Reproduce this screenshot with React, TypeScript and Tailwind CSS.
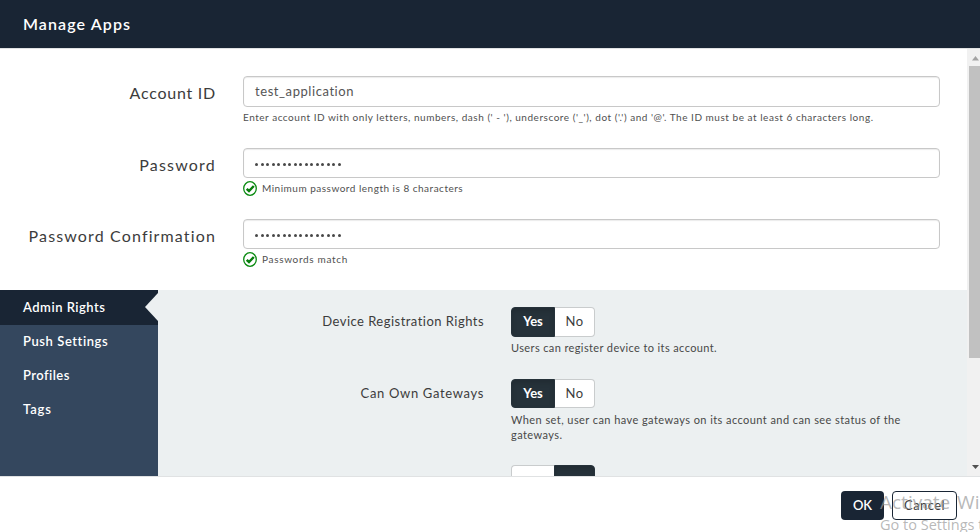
import type { ReactNode } from 'react';

function Check() {
  return (
    <svg width="14" height="15" viewBox="0 0 14 15" className="shrink-0">
      <ellipse cx="7" cy="7.5" rx="6.3" ry="6.8" fill="white" stroke="#098a10" strokeWidth="1.3" />
      <path d="M3.7 7.8 L6 10 L10.8 5" fill="none" stroke="#087d0d" strokeWidth="2.5" />
    </svg>
  );
}

function Field({ label, labelClass, value, inputClass, children }: { label: string; labelClass: string; value: ReactNode; inputClass: string; children: ReactNode }) {
  return (
    <div className="flex">
      <div className={'mr-[27px] w-[216px] shrink-0 whitespace-nowrap pt-[5px] text-right text-[16px] leading-[24px] text-[#3c3c3c] ' + labelClass}>{label}</div>
      <div className="w-[697px]">
        <div className={'flex items-center rounded-[4px] border border-[#c8c8c8] bg-white px-[11px] text-[13px] text-[#555] shadow-[inset_0_1px_1px_rgba(0,0,0,0.08)] ' + inputClass}>{value}</div>
        {children}
      </div>
    </div>
  );
}

function Dots() {
  return (
    <div className="flex gap-[2.5px] pt-[2px]">
      {Array.from({ length: 16 }, (_, i) => (
        <span key={i} className="size-[3px] rounded-full bg-[#484848]" />
      ))}
    </div>
  );
}

function Toggle({ on = true, height = 'h-[30px]', yesClass = 'w-[44px]' }: { on?: boolean; height?: string; yesClass?: string }) {
  const active = 'bg-[#26323a] font-bold text-white border-[#26323a] shadow-[inset_0_3px_5px_rgba(0,0,0,0.125)]';
  const idle = 'bg-white text-[#3c3c3c] border-[#c9cccd]';
  return (
    <div className={'flex w-[84px] text-[13px] ' + height}>
      <div className={'flex items-center justify-center rounded-l-[4px] border ' + yesClass + ' ' + (on ? active : idle + ' border-r-0')}>Yes</div>
      <div className={'flex flex-1 items-center justify-center rounded-r-[4px] border ' + (on ? idle + ' border-l-0 tracking-[0.4px]' : active)}>No</div>
    </div>
  );
}

const tabs = [
  { name: 'Push Settings', spacing: 'tracking-[0.57px]' },
  { name: 'Profiles', spacing: 'tracking-[0.45px]' },
  { name: 'Tags', spacing: 'tracking-[0.9px]' },
];

export default function App() {
  return (
    <div className="relative flex h-[532px] w-[980px] flex-col overflow-hidden bg-white font-['Lato',sans-serif]">
      <header className="flex h-[48px] shrink-0 items-center bg-[#192534] pb-[1px] pl-[23px] text-[16px] font-semibold tracking-[1.1px] text-white">Manage Apps</header>
      <div className="flex h-[429px] shrink-0 border-y border-[#e0e2e3]">
        <main className="w-[967px] overflow-hidden">
          <div className="flex h-[241px] flex-col pt-[27px]">
            <div className="h-[72px]">
              <Field label="Account ID" labelClass="tracking-[0.75px]" value={<span className="tracking-[0.57px]">test_application</span>} inputClass="h-[31px]">
                <p className="mt-[2px] whitespace-nowrap text-[10px] leading-[16px] tracking-[0.53px] text-[#505050]">Enter account ID with only letters, numbers, dash (' - '), underscore ('_'), dot ('.') and '@'. The ID must be at least 6 characters long.</p>
              </Field>
            </div>
            <div className="h-[71px]">
              <Field label="Password" labelClass="tracking-[1.2px]" value={<Dots />} inputClass="h-[30px]">
                <div className="mt-[3px] flex items-center gap-[5px] text-[10px] leading-[15px] tracking-[0.5px] text-[#505050]"><Check />Minimum password length is 8 characters</div>
              </Field>
            </div>
            <Field label="Password Confirmation" labelClass="tracking-[1.14px]" value={<Dots />} inputClass="h-[30px]">
              <div className="mt-[3px] flex items-center gap-[5px] text-[10px] leading-[15px] tracking-[0.67px] text-[#505050]"><Check />Passwords match</div>
            </Field>
          </div>
          <div className="flex h-[186px] bg-[#ecf0f1]">
            <nav className="w-[158px] shrink-0 bg-[#34475e] text-[13px] font-semibold text-white">
              <div className="flex h-[35px] items-center justify-between bg-[#192534] pl-[23px] tracking-[0.5px]">
                Admin Rights
                <svg width="13" height="28" viewBox="0 0 13 28" className="mb-[2px]"><path d="M13 0 L0 14 L13 28Z" fill="#ecf0f1" /></svg>
              </div>
              {tabs.map((t) => (
                <div key={t.name} className={'flex h-[34px] items-center pl-[23px] ' + t.spacing}>{t.name}</div>
              ))}
            </nav>
            <section className="w-[809px] pt-[17px] text-[#3c3c3c]">
              <div className="flex h-[72px]">
                <div className="mr-[27px] w-[326px] pt-[4px] text-right text-[13px] leading-[20px] tracking-[0.47px]">Device Registration Rights</div>
                <div>
                  <Toggle />
                  <p className="mt-[3px] text-[11px] leading-[15px] tracking-[0.38px] text-[#484848]">Users can register device to its account.</p>
                </div>
              </div>
              <div className="flex h-[86px]">
                <div className="mr-[27px] w-[326px] pt-[4px] text-right text-[13px] leading-[20px] tracking-[0.66px]">Can Own Gateways</div>
                <div>
                  <Toggle height="h-[29px]" />
                  <p className="mt-[4px] whitespace-nowrap text-[11px] leading-[15px] tracking-[0.43px] text-[#484848]">When set, user can have gateways on its account and can see status of the<br />gateways.</p>
                </div>
              </div>
              <div className="pl-[353px]"><Toggle on={false} height="h-[35px]" yesClass="w-[43px]" /></div>
            </section>
          </div>
        </main>
        <div className="flex w-[13px] flex-col items-end bg-[#f1f1f1]">
          <svg width="11" height="17" viewBox="0 0 11 17" className="shrink-0"><path d="M3 11.5 L6.5 7 L10 11.5Z" fill="#a3a3a3" /></svg>
          <div className="h-[292px] w-[11px] shrink-0 bg-[#c1c1c1]" />
          <svg width="11" height="17" viewBox="0 0 11 17" className="mt-auto shrink-0"><path d="M3 6 L10 6 L6.5 10Z" fill="#505050" /></svg>
        </div>
      </div>
      <footer className="flex flex-1 items-start gap-[8px] pl-[841px] pt-[14px] text-[13px]">
        <button className="h-[29px] w-[43px] rounded-[4px] bg-[#192534] font-semibold text-white">OK</button>
        <button className="h-[29px] w-[65px] rounded-[4px] border border-[#192534] bg-white tracking-[0.4px] text-[#3c3c3c]">Cancel</button>
      </footer>
      <div className="pointer-events-none absolute left-[880px] top-[490px] whitespace-nowrap font-['Open_Sans',sans-serif] text-[#999]/70">
        <div className="text-[19px] leading-[25px] [word-spacing:2px]">Activate Windows</div>
        <div className="text-[14.5px] leading-[20px]">Go to Settings to activate Windows.</div>
      </div>
    </div>
  );
}
